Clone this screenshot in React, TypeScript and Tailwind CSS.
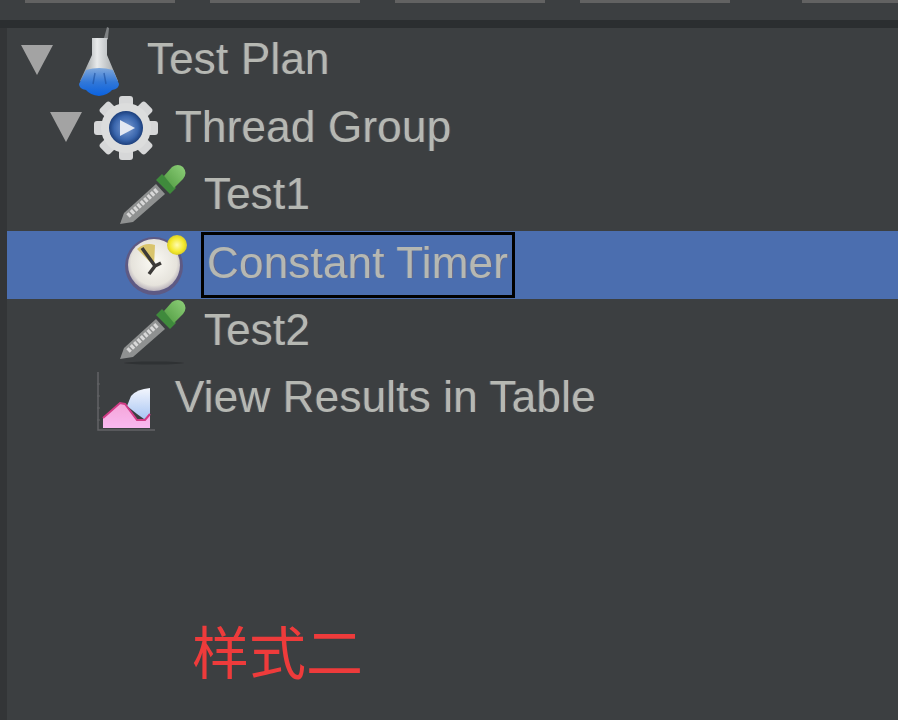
import React from "react";

const Arrow = ({ className }: { className: string }) => (
  <svg width="32" height="30" viewBox="0 0 32 30" className={className}>
    <path d="M0 0H32L16 30Z" fill="#a3a3a3" />
  </svg>
);

const Flask = ({ className }: { className: string }) => (
  <svg width="42" height="70" viewBox="0 0 42 70" className={className}>
    <defs>
      <linearGradient id="glass" x1="0" x2="1" y1="0" y2="0">
        <stop offset="0" stopColor="#83898c" />
        <stop offset="0.45" stopColor="#e8eaeb" />
        <stop offset="1" stopColor="#9a9fa2" />
      </linearGradient>
      <linearGradient id="water" x1="0" x2="0" y1="0" y2="1">
        <stop offset="0" stopColor="#7fa8dc" />
        <stop offset="0.5" stopColor="#3278d8" />
        <stop offset="1" stopColor="#0a62e0" />
      </linearGradient>
    </defs>
    <path d="M26 11L29 0L31 1L30 11Z" fill="#7f8284" />
    <path d="M14 11H30L29 13V28L40 54H2L14 28V13Z" fill="url(#glass)" />
    <path d="M8 43Q21 39 35 43L41 57Q41 62 34 63Q30 68 21 69Q12 68 8 63Q1 62 1 57Z" fill="url(#water)" />
    <path d="M17 46L15 57M26 46L28 57" stroke="#1c4f9e" strokeWidth="1.5" opacity="0.6" />
  </svg>
);

const Gear = ({ className }: { className: string }) => {
  const teeth = [0, 45, 90, 135, 180, 225, 270, 315];
  return (
    <svg width="64" height="66" viewBox="-32 -33 64 66" className={className}>
      <defs>
        <radialGradient id="ball" cx="0.5" cy="0.5" r="0.5">
          <stop offset="0" stopColor="#7f9fd4" />
          <stop offset="0.7" stopColor="#3a66ad" />
          <stop offset="1" stopColor="#1c3f7c" />
        </radialGradient>
      </defs>
      {teeth.map((a) => (
        <rect key={a} x="-7" y="-32" width="14" height="16" rx="3" fill="#d6d7d8" transform={`rotate(${a})`} />
      ))}
      <circle r="25" fill="#dcdddd" />
      <circle r="17" fill="url(#ball)" />
      <path d="M-6 -8L9 0L-6 8Z" fill="#e3e8f2" />
    </svg>
  );
};

const Dropper = ({ id, className, shadow }: { id: string; className: string; shadow?: boolean }) => (
  <svg width="68" height="62" viewBox="0 0 68 62" className={`overflow-visible ${className}`}>
    <defs>
      <linearGradient id={id} x1="0" x2="1" y1="1" y2="0">
        <stop offset="0" stopColor="#4f9a40" />
        <stop offset="1" stopColor="#8fd07a" />
      </linearGradient>
    </defs>
    {shadow && <ellipse cx="34" cy="64" rx="30" ry="1.5" fill="#2f3234" />}
    <path d="M0 60L4 49L36 20L45 30L13 58Z" fill="#8f9191" />
    <path d="M8 52L38 25" stroke="#d8d8d8" strokeWidth="5" strokeDasharray="3 1.5" />
    <path d="M36 16L50 30L56 24L42 10Z" fill="#3f8a3c" />
    <path d="M44 12L52 3Q58 -1 63 3Q68 9 63 15L54 24Z" fill={`url(#${id})`} />
  </svg>
);

const Clock = ({ className }: { className: string }) => (
  <svg width="64" height="64" viewBox="0 0 64 64" className={className}>
    <defs>
      <radialGradient id="face" cx="0.5" cy="0.45" r="0.55">
        <stop offset="0" stopColor="#fbfaf4" />
        <stop offset="0.8" stopColor="#e6e3dc" />
        <stop offset="1" stopColor="#b9b2bb" />
      </radialGradient>
      <radialGradient id="bulb" cx="0.5" cy="0.5" r="0.5">
        <stop offset="0" stopColor="#fffbb0" />
        <stop offset="0.7" stopColor="#f4e92c" />
        <stop offset="1" stopColor="#d8cc2a" />
      </radialGradient>
    </defs>
    <circle cx="29" cy="33" r="29" fill="#5e5a84" />
    <circle cx="29" cy="32" r="26" fill="url(#face)" />
    <path d="M29 33L12 16Q20 9 30 12Z" fill="#d9c46c" />
    <path d="M17 15L30 33L24 41M30 33L36 30" stroke="#3c3a38" strokeWidth="3.5" fill="none" />
    <circle cx="52" cy="12" r="10" fill="url(#bulb)" />
  </svg>
);

const Chart = ({ className }: { className: string }) => (
  <svg width="60" height="60" viewBox="0 0 60 60" className={className}>
    <defs>
      <linearGradient id="pink" x1="0" x2="0" y1="0" y2="1">
        <stop offset="0" stopColor="#f4a6d8" />
        <stop offset="1" stopColor="#f9b8f0" />
      </linearGradient>
      <linearGradient id="sky" x1="0" x2="0" y1="0" y2="1">
        <stop offset="0" stopColor="#f3f6fd" />
        <stop offset="1" stopColor="#a9c6f4" />
      </linearGradient>
    </defs>
    <path d="M1 0V58H58" fill="none" stroke="#626365" strokeWidth="1.5" />
    <path d="M-1 12H3M-1 24H3M-1 36H3M-1 48H3" stroke="#626365" strokeWidth="1" />
    <path d="M30 34L34 24Q40 17 53 16V46L47 47L40 42Z" fill="url(#sky)" />
    <path d="M6 46L23 31L28 32L40 48L48 48L53 42V56H6Z" fill="url(#pink)" />
    <path d="M6 46L23 31L28 32L40 48L48 48L53 42" fill="none" stroke="#d13c86" strokeWidth="2" />
  </svg>
);

const text =
  "text-[#b6b8b2] text-[44px] tracking-[0.2px] leading-none whitespace-nowrap [font-family:'Liberation_Sans',sans-serif] [text-shadow:-1px_0_rgba(90,140,190,0.4),1px_0_rgba(150,90,70,0.4)]";

function Row({ children, selected }: { children: React.ReactNode; selected?: boolean }) {
  return (
    <div className={`flex shrink-0 items-center ${selected ? "h-[68px] bg-[#4b6eaf]" : "h-[67.5px]"}`}>{children}</div>
  );
}

export default function App() {
  return (
    <div className="relative flex h-[720px] w-[898px] flex-col overflow-hidden bg-[#3c3f41]">
      <div className="flex h-[3px] gap-[35px] pl-[25px] blur-[0.5px]">
        <div className="w-[150px] shrink-0 bg-[#626262]" />
        <div className="w-[150px] shrink-0 bg-[#626262]" />
        <div className="w-[150px] shrink-0 bg-[#626262]" />
        <div className="w-[150px] shrink-0 bg-[#626262]" />
        <div className="ml-[37px] w-[96px] shrink-0 bg-[#626262]" />
      </div>
      <div className="mt-[17px] h-[8px] bg-[#2b2e30] blur-[0.5px]" />
      <div className="flex flex-1">
        <div className="w-[7px] bg-[#333537]" />
        <div className="flex flex-1 flex-col blur-[0.7px]">
          <Row>
            <Arrow className="ml-[14px] -mt-[4px] blur-[0.5px]" />
            <Flask className="ml-[25px] mt-[1px] blur-[0.6px]" />
            <span className={`ml-[27px] -mt-[5px] ${text}`}>Test Plan</span>
          </Row>
          <Row>
            <Arrow className="ml-[43px] -mt-[4px] blur-[0.5px]" />
            <Gear className="ml-[12px] -mt-[2px] blur-[0.6px]" />
            <span className={`ml-[17px] -mt-[4px] ${text}`}>Thread Group</span>
          </Row>
          <Row>
            <Dropper id="d1" className="ml-[113px] -mt-[4px] blur-[0.6px]" />
            <span className={`ml-[16px] -mt-[5px] ${text}`}>Test1</span>
          </Row>
          <Row selected>
            <Clock className="ml-[118px] blur-[0.6px]" />
            <span className={`ml-[12px] flex h-[66px] items-center border-[3px] border-black pr-[4px] pl-[3px] ${text}`}>
              <span className="-mt-[4px]">Constant Timer</span>
            </span>
          </Row>
          <Row>
            <Dropper id="d2" shadow className="ml-[113px] -mt-[4px] blur-[0.6px]" />
            <span className={`ml-[16px] -mt-[5px] ${text}`}>Test2</span>
          </Row>
          <Row>
            <Chart className="ml-[90px] mt-[4px] blur-[0.5px]" />
            <span className={`ml-[18px] -mt-[5px] ${text}`}>View Results in Table</span>
          </Row>
          <div className="mt-[187px] ml-[185px] text-[57px] leading-none text-[#ee3b3b] [font-family:'Noto_Sans_CJK_SC',sans-serif]">
            样式二
          </div>
        </div>
      </div>
    </div>
  );
}
